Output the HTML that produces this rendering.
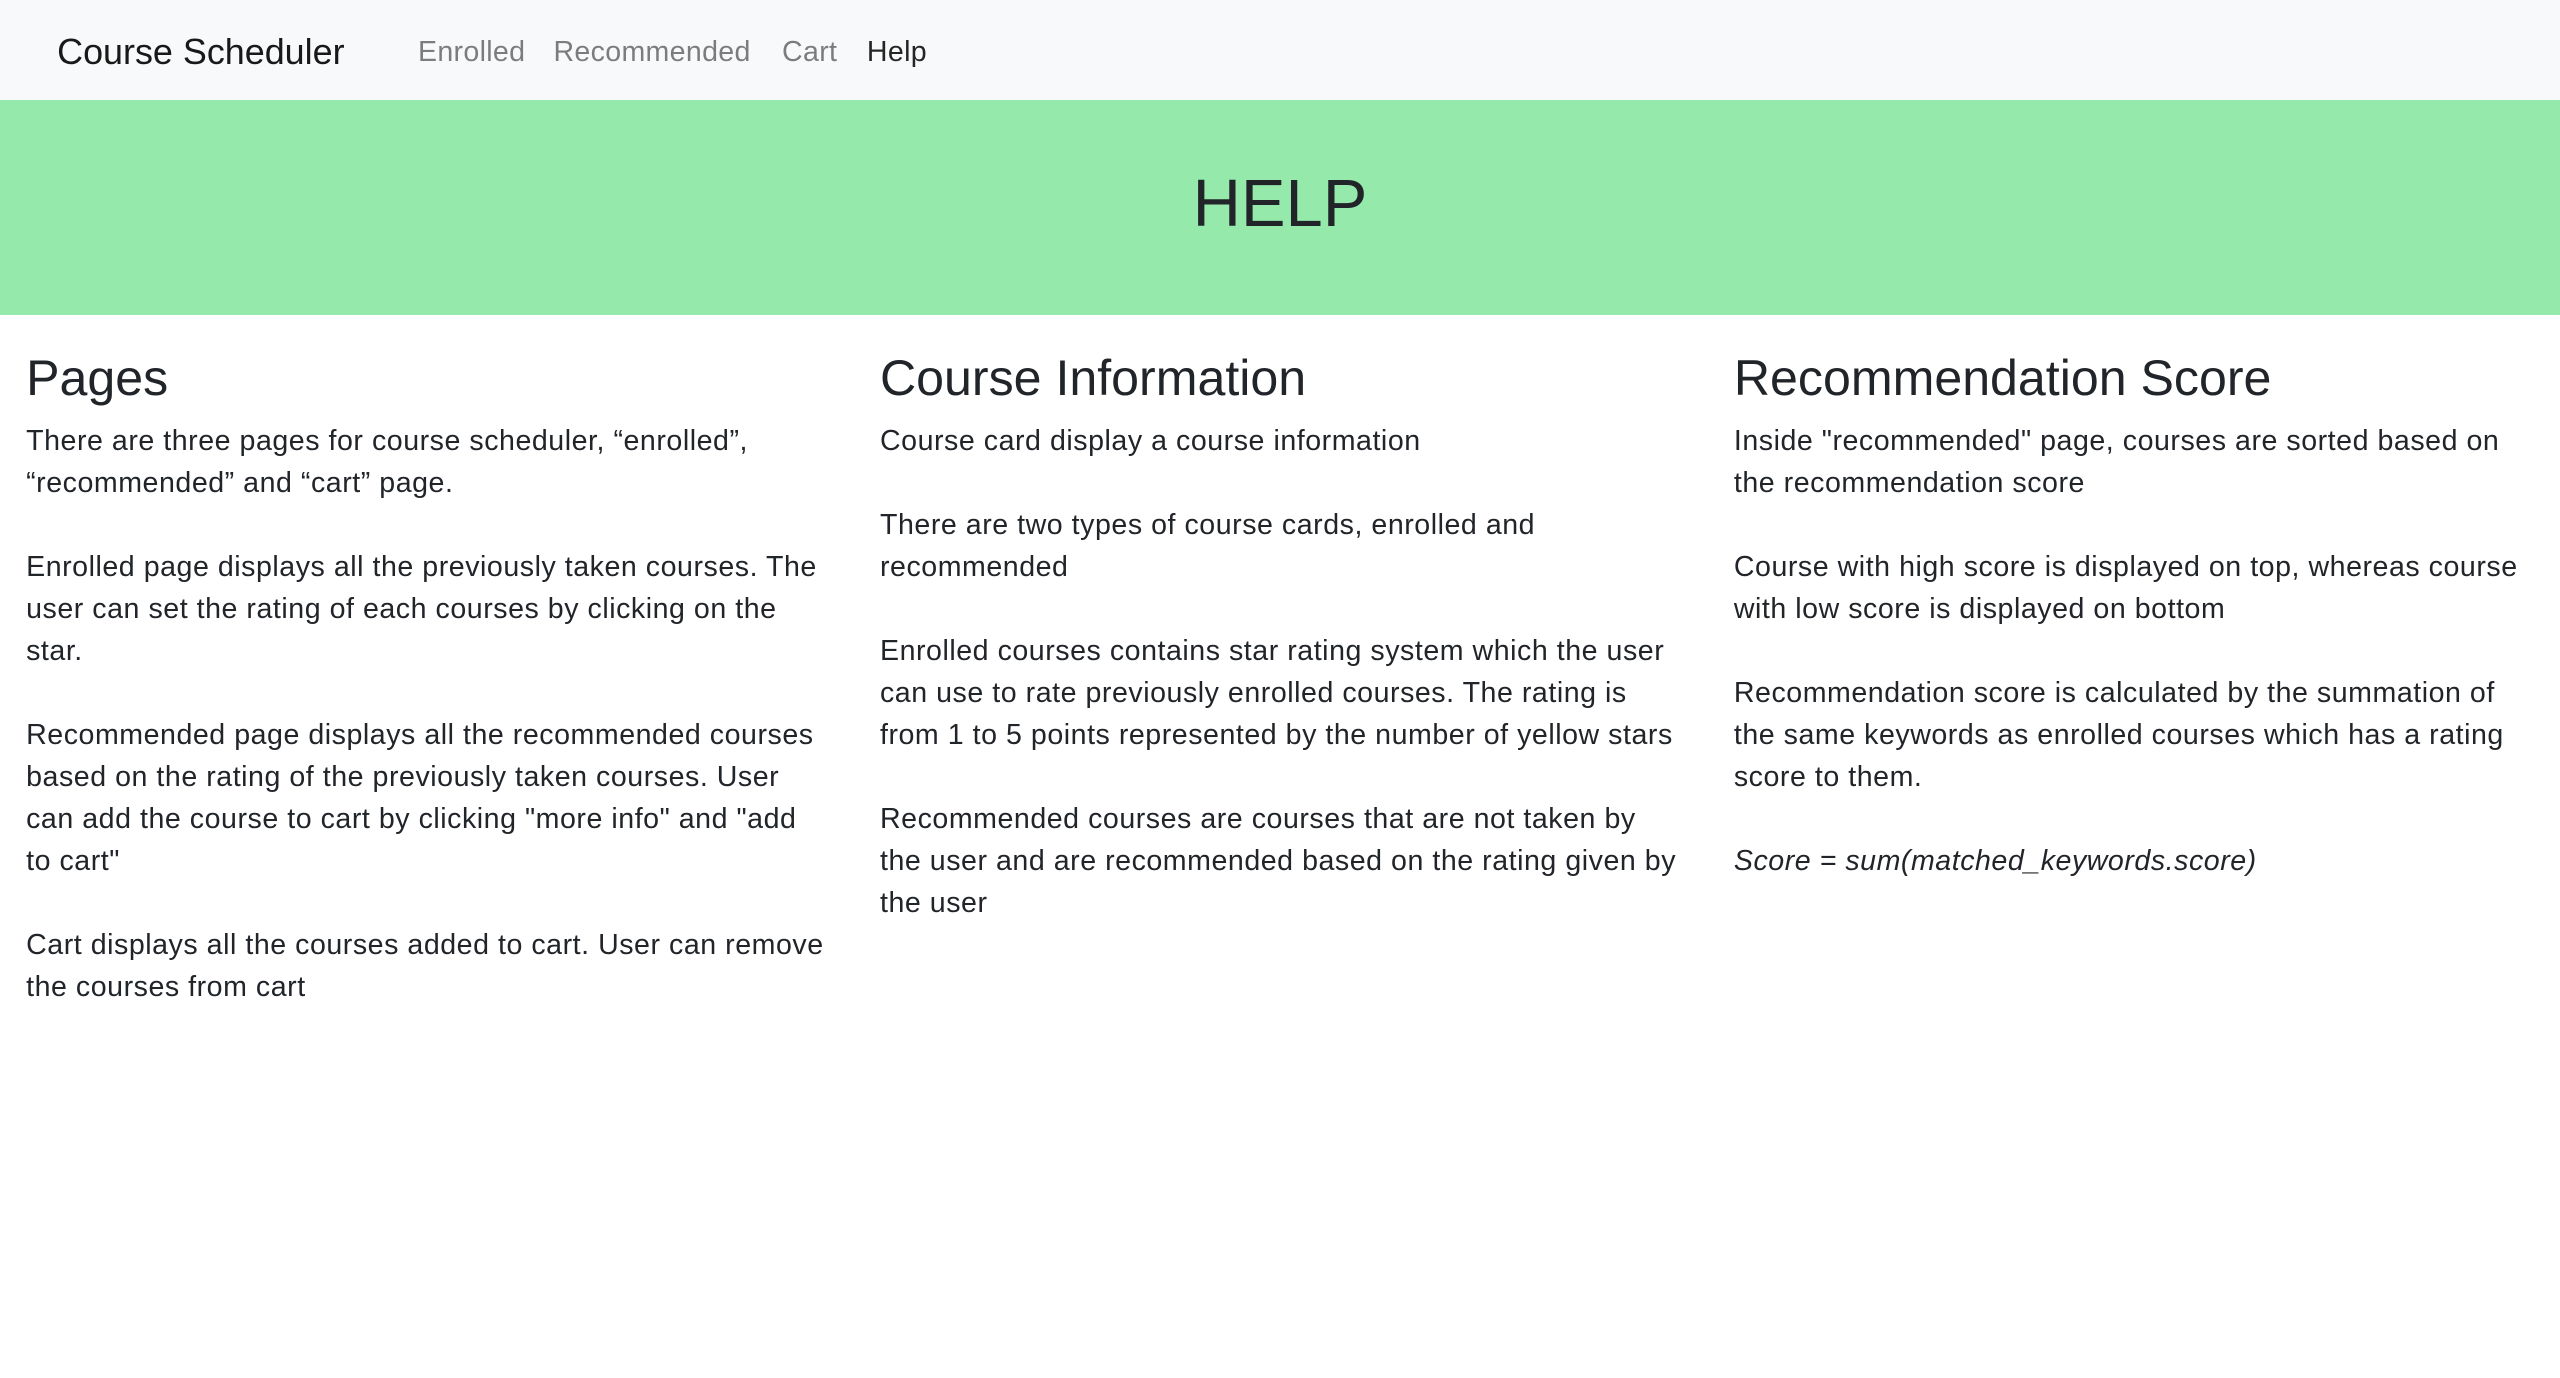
<!DOCTYPE html>
<html><head><meta charset="utf-8"><style>
html,body{margin:0;padding:0;background:#fff;}
body{width:1568px;height:844px;zoom:1.63265;overflow:hidden;font-family:"Liberation Sans",sans-serif;color:#212529;position:relative;}
.nav{position:absolute;left:0;top:0;width:1568px;height:61px;background:#f8f9fa;}
.brand{position:absolute;left:35px;top:17px;font-size:22px;line-height:30px;color:rgba(0,0,0,.9);}
.lk{position:absolute;top:19px;font-size:17.5px;line-height:26px;color:rgba(0,0,0,.5);letter-spacing:.2px;}
.jumbo{position:absolute;left:0;top:61px;width:1568px;height:132px;background:#95eaab;}
.jumbo h1{margin:0;position:absolute;left:0;right:0;top:37px;text-align:center;font-weight:400;font-size:41px;line-height:54px;}
.col{position:absolute;top:214px;width:520px;}
.col h2{margin:0;font-weight:400;font-size:30.7px;line-height:36px;height:44px;}
.col p{margin:0;font-size:17.5px;letter-spacing:.33px;line-height:25.7px;white-space:nowrap;}
</style></head><body>
<div class="nav">
<div class="brand">Course Scheduler</div>
<div class="lk" style="left:256px">Enrolled</div>
<div class="lk" style="left:339px">Recommended</div>
<div class="lk" style="left:479px">Cart</div>
<div class="lk" style="left:531px;color:rgba(0,0,0,.85)">Help</div>
</div>
<div class="jumbo"><h1>HELP</h1></div>
<div class="col" style="left:16px">
<h2>Pages</h2>
<p>There are three pages for course scheduler, “enrolled”,<br>“recommended” and “cart” page.<br><br>Enrolled page displays all the previously taken courses. The<br>user can set the rating of each courses by clicking on the<br>star.<br><br>Recommended page displays all the recommended courses<br>based on the rating of the previously taken courses. User<br>can add the course to cart by clicking "more info" and "add<br>to cart"<br><br>Cart displays all the courses added to cart. User can remove<br>the courses from cart</p>
</div>
<div class="col" style="left:539px">
<h2>Course Information</h2>
<p>Course card display a course information<br><br>There are two types of course cards, enrolled and<br>recommended<br><br>Enrolled courses contains star rating system which the user<br>can use to rate previously enrolled courses. The rating is<br>from 1 to 5 points represented by the number of yellow stars<br><br>Recommended courses are courses that are not taken by<br>the user and are recommended based on the rating given by<br>the user</p>
</div>
<div class="col" style="left:1062px">
<h2>Recommendation Score</h2>
<p>Inside "recommended" page, courses are sorted based on<br>the recommendation score<br><br>Course with high score is displayed on top, whereas course<br>with low score is displayed on bottom<br><br>Recommendation score is calculated by the summation of<br>the same keywords as enrolled courses which has a rating<br>score to them.<br><br><i>Score = sum(matched_keywords.score)</i></p>
</div>
</body></html>
